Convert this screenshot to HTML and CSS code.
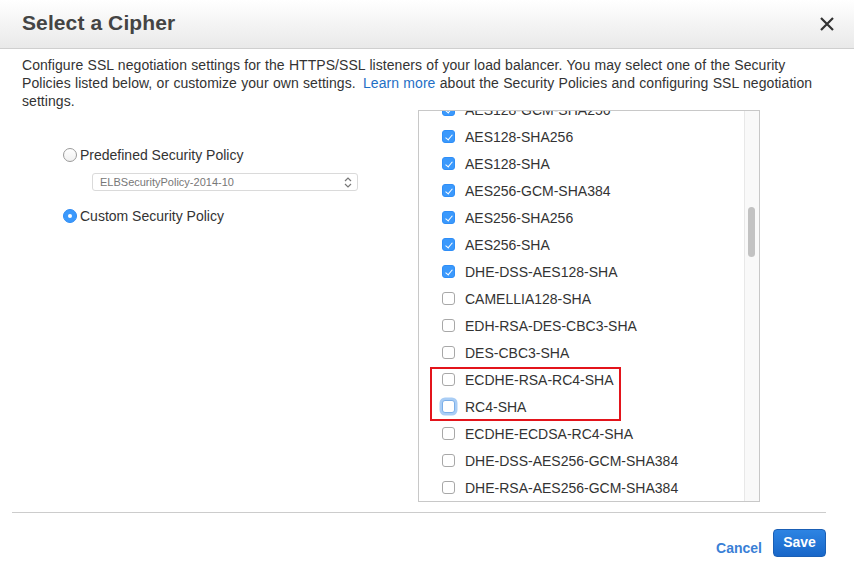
FILE: index.html
```html
<!DOCTYPE html>
<html>
<head>
<meta charset="utf-8">
<link rel="stylesheet" href="styles.css">
</head>
<body>
<div class="modal">
  <div class="header">
    <h1 class="title">Select a Cipher</h1>
    <svg class="close" width="16" height="16" viewBox="0 0 16 16"><path d="M2 2L14 14M14 2L2 14" stroke="#333" stroke-width="2.2" stroke-linecap="butt"/></svg>
  </div>
  <p class="desc">Configure SSL negotiation settings for the HTTPS/SSL listeners of your load balancer. You may select one of the Security Policies listed below, or customize your own settings. <a class="link">Learn more</a> about the Security Policies and configuring SSL negotiation settings.</p>
  <div class="main">
    <div class="left">
      <label class="radio-row"><span class="radio"></span>Predefined Security Policy</label>
      <div class="select">
        <span>ELBSecurityPolicy-2014-10</span>
        <svg width="8" height="11" viewBox="0 0 8 11"><path d="M1 4L4 1L7 4M1 7L4 10L7 7" fill="none" stroke="#777" stroke-width="1.2"/></svg>
      </div>
      <label class="radio-row second"><span class="radio checked"></span>Custom Security Policy</label>
    </div>
    <div class="listbox">
      <div class="list">
        <div class="rows">
          <div class="row"><span class="cb on"></span>AES128-GCM-SHA256</div>
          <div class="row"><span class="cb on"></span>AES128-SHA256</div>
          <div class="row"><span class="cb on"></span>AES128-SHA</div>
          <div class="row"><span class="cb on"></span>AES256-GCM-SHA384</div>
          <div class="row"><span class="cb on"></span>AES256-SHA256</div>
          <div class="row"><span class="cb on"></span>AES256-SHA</div>
          <div class="row"><span class="cb on"></span>DHE-DSS-AES128-SHA</div>
          <div class="row"><span class="cb"></span>CAMELLIA128-SHA</div>
          <div class="row"><span class="cb"></span>EDH-RSA-DES-CBC3-SHA</div>
          <div class="row"><span class="cb"></span>DES-CBC3-SHA</div>
          <div class="highlight">
            <div class="row"><span class="cb"></span>ECDHE-RSA-RC4-SHA</div>
            <div class="row"><span class="cb focus"></span>RC4-SHA</div>
          </div>
          <div class="row"><span class="cb"></span>ECDHE-ECDSA-RC4-SHA</div>
          <div class="row"><span class="cb"></span>DHE-DSS-AES256-GCM-SHA384</div>
          <div class="row"><span class="cb"></span>DHE-RSA-AES256-GCM-SHA384</div>
          <div class="row"><span class="cb"></span>DHE-RSA-AES128-SHA</div>
        </div>
      </div>
      <div class="track"><div class="thumb"></div></div>
    </div>
  </div>
  <div class="separator"></div>
  <div class="footer">
    <a class="cancel">Cancel</a>
    <button class="save">Save</button>
  </div>
</div>
</body>
</html>
```
FILE: styles.css
```css
html, body {
  margin: 0;
  padding: 0;
  background: #fff;
}
body {
  font-family: "Liberation Sans", Arial, sans-serif;
  color: #333;
  width: 854px;
  height: 566px;
  overflow: hidden;
}
.header {
  height: 48px;
  border-bottom: 1px solid #cfcfcf;
  background: linear-gradient(#ffffff, #e9e9e9);
  display: flex;
  align-items: center;
  justify-content: space-between;
  padding: 0 19px 0 22px;
}
.title {
  margin: 0 0 3px 0;
  font-size: 21px;
  font-weight: bold;
  color: #444;
  letter-spacing: 0.1px;
}
.close {
  display: block;
  margin-top: 0;
}
.desc {
  margin: 0;
  padding: 7px 30px 0 22px;
  font-size: 14px;
  line-height: 18px;
  color: #333;
  letter-spacing: 0.06px;
  word-spacing: 0.3px;
}
.link {
  color: #1f6fc5;
  margin-left: 3px;
}
.main {
  display: flex;
  padding-left: 22px;
}
.left {
  width: 396px;
  padding-top: 36px;
  font-size: 14px;
}
.radio-row {
  display: flex;
  align-items: center;
  height: 18px;
  margin-left: 41px;
  color: #333;
}
.radio-row.second {
  margin-top: 16px;
}
.radio {
  box-sizing: border-box;
  width: 14px;
  height: 14px;
  border-radius: 50%;
  border: 1px solid #9a9a9a;
  background: linear-gradient(#fff, #f0f0f0);
  margin-right: 3px;
  position: relative;
}
.radio.checked {
  border-color: #2f8cf5;
  background: #3b99fc;
}
.radio.checked::after {
  content: "";
  position: absolute;
  left: 4px;
  top: 4px;
  width: 4px;
  height: 4px;
  border-radius: 50%;
  background: #fff;
}
.select {
  box-sizing: border-box;
  margin: 9px 0 0 70px;
  width: 266px;
  height: 18px;
  border: 1px solid #dadada;
  border-radius: 3px;
  display: flex;
  align-items: center;
  justify-content: space-between;
  padding: 0 5px 0 7px;
  font-size: 11px;
  color: #777;
  background: #fff;
}
.select svg {
  display: block;
}
.listbox {
  box-sizing: border-box;
  width: 342px;
  height: 392px;
  border: 1px solid #c8c8c8;
  display: flex;
}
.list {
  flex: 1;
  overflow: hidden;
}
.rows {
  margin-top: -15px;
}
.row {
  height: 27px;
  display: flex;
  align-items: center;
  font-size: 14px;
  color: #333;
  padding-left: 23px;
}
.cb {
  box-sizing: border-box;
  width: 13px;
  height: 13px;
  border-radius: 3px;
  border: 1px solid #a8a8a8;
  background: #fff;
  margin-right: 10px;
  position: relative;
  flex: none;
}
.cb.on {
  border-color: #2f8ef7;
  background: #3b99fc;
}
.cb.on::after {
  content: "";
  position: absolute;
  left: 3.5px;
  top: 1.5px;
  width: 3px;
  height: 6px;
  border: solid #fff;
  border-width: 0 1.6px 1.6px 0;
  transform: rotate(40deg);
}
.cb.focus {
  border-color: #7aaee8;
  box-shadow: 0 0 0 2.5px #a9cdf5;
}
.highlight {
  position: relative;
}
.highlight::after {
  content: "";
  position: absolute;
  left: 11px;
  top: 1px;
  width: 187px;
  bottom: -1px;
  border: 2px solid #e3141b;
}
.track {
  width: 14px;
  border-left: 1px solid #e8e8e8;
  background: #f9f9f9;
  flex: none;
}
.thumb {
  margin: 96px 0 0 3px;
  width: 7px;
  height: 50px;
  border-radius: 4px;
  background: #c2c2c2;
}
.separator {
  margin: 10px 28px 0 12px;
  border-top: 1px solid #cccccc;
}
.footer {
  display: flex;
  justify-content: flex-end;
  align-items: center;
  padding: 16px 28px 0 0;
}
.cancel {
  font-size: 14px;
  font-weight: bold;
  color: #3a7fd6;
  margin-right: 11px;
  margin-top: 9px;
}
.save {
  box-sizing: border-box;
  width: 53px;
  height: 28px;
  border: 1px solid #1a5fb5;
  border-radius: 4px;
  background: linear-gradient(#2d84e3, #1867c9);
  color: #fff;
  font-family: "Liberation Sans", Arial, sans-serif;
  font-size: 14px;
  font-weight: bold;
  padding: 0 0 2px 0;
}
```
